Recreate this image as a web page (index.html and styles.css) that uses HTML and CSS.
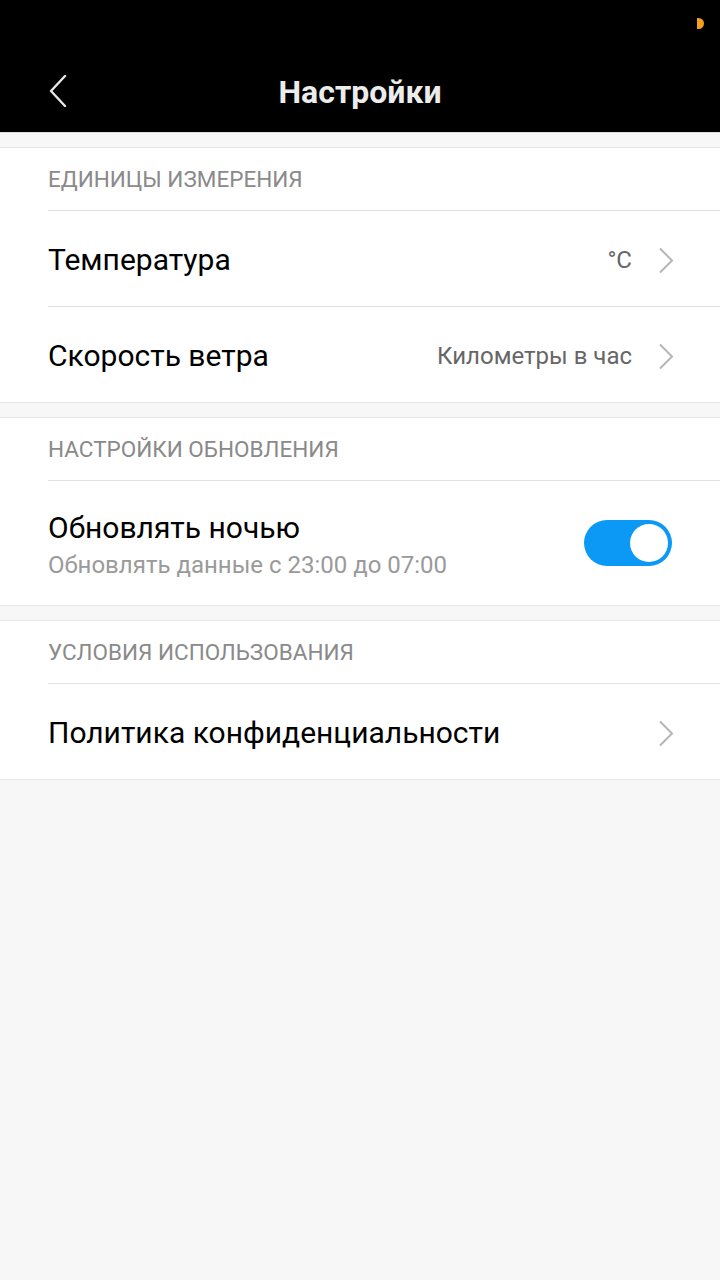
FILE: index.html
```html
<!DOCTYPE html>
<html lang="ru">
<head>
<meta charset="utf-8">
<title>Настройки</title>
<link rel="stylesheet" href="styles.css">
</head>
<body>
<header class="topbar">
  <div class="statusbar"><span class="dot"></span></div>
  <div class="toolbar">
    <svg class="back" width="20" height="32" viewBox="0 0 20 32"><path d="M17 1 L3 16 L17 31" fill="none" stroke="#e6e6e6" stroke-width="2.4" stroke-linecap="round" stroke-linejoin="round"/></svg>
    <h1 class="title">Настройки</h1>
  </div>
</header>
<main class="content">
  <section class="group">
    <div class="group-head">ЕДИНИЦЫ ИЗМЕРЕНИЯ</div>
    <div class="row">
      <span class="row-title">Температура</span>
      <span class="row-value">°C</span>
      <svg class="chev" width="16" height="27" viewBox="0 0 16 27"><path d="M2 1.5 L14 13.5 L2 25.5" fill="none" stroke="#b5b5b5" stroke-width="2"/></svg>
    </div>
    <div class="row">
      <span class="row-title">Скорость ветра</span>
      <span class="row-value">Километры в час</span>
      <svg class="chev" width="16" height="27" viewBox="0 0 16 27"><path d="M2 1.5 L14 13.5 L2 25.5" fill="none" stroke="#b5b5b5" stroke-width="2"/></svg>
    </div>
  </section>
  <section class="group">
    <div class="group-head">НАСТРОЙКИ ОБНОВЛЕНИЯ</div>
    <div class="row row-tall">
      <div class="row-text">
        <div class="row-title">Обновлять ночью</div>
        <div class="row-sub">Обновлять данные с 23:00 до 07:00</div>
      </div>
      <span class="switch on"><span class="knob"></span></span>
    </div>
  </section>
  <section class="group">
    <div class="group-head">УСЛОВИЯ ИСПОЛЬЗОВАНИЯ</div>
    <div class="row">
      <span class="row-title">Политика конфиденциальности</span>
      <svg class="chev" width="16" height="27" viewBox="0 0 16 27"><path d="M2 1.5 L14 13.5 L2 25.5" fill="none" stroke="#b5b5b5" stroke-width="2"/></svg>
    </div>
  </section>
</main>
</body>
</html>
```

FILE: styles.css
```css
* { box-sizing: border-box; }
html, body { margin: 0; padding: 0; }
body {
  width: 720px;
  min-height: 1280px;
  background: #f7f7f7;
  font-family: Roboto, "Noto Sans", "Liberation Sans", sans-serif;
  color: #000;
}
.topbar {
  background: #000;
  height: 133px;
  border-bottom: 1px solid #dcdcdc;
}
.statusbar {
  height: 50px;
  display: flex;
  justify-content: flex-end;
  align-items: flex-start;
  padding: 18px 16px 0 0;
}
.dot {
  width: 7px;
  height: 11px;
  background: #f4a01c;
  border-radius: 0 6px 6px 0;
}
.toolbar {
  height: 82px;
  display: flex;
  align-items: center;
  justify-content: center;
  position: relative;
}
.back {
  position: absolute;
  left: 48px;
  top: 25px;
}
.title {
  margin: 0;
  padding-top: 2px;
  font-size: 32px;
  font-weight: 700;
  color: #ececec;
}
.content {
  display: flex;
  flex-direction: column;
}
.group {
  margin-top: 14px;
  background: #fff;
  border-top: 1px solid #e8e8e8;
  border-bottom: 1px solid #e8e8e8;
}
.group-head {
  height: 62px;
  padding-left: 48px;
  display: flex;
  align-items: center;
  font-size: 22.5px;
  color: #8a8a8a;
}
.row {
  margin-left: 48px;
  padding-right: 46px;
  height: 96px;
  border-top: 1px solid #e2e2e2;
  display: flex;
  align-items: center;
  padding-top: 3px;
}
.row-tall {
  height: 125px;
  padding-right: 48px;
  padding-top: 0;
}
.row-text {
  flex: 1;
  padding-top: 4px;
}
.row-title {
  flex: 1;
  font-size: 30px;
  line-height: 36px;
  color: #000;
}
.row-sub {
  margin-top: 3px;
  font-size: 24px;
  line-height: 32px;
  color: #9a9a9a;
}
.row-value {
  font-size: 24px;
  color: #666;
  margin-right: 26px;
}
.chev { display: block; }
.switch {
  width: 88px;
  height: 46px;
  border-radius: 23px;
  background: #0c98f5;
  display: flex;
  align-items: center;
  justify-content: flex-end;
  padding: 0 4px;
}
.knob {
  width: 38px;
  height: 38px;
  border-radius: 50%;
  background: #fff;
}
```
